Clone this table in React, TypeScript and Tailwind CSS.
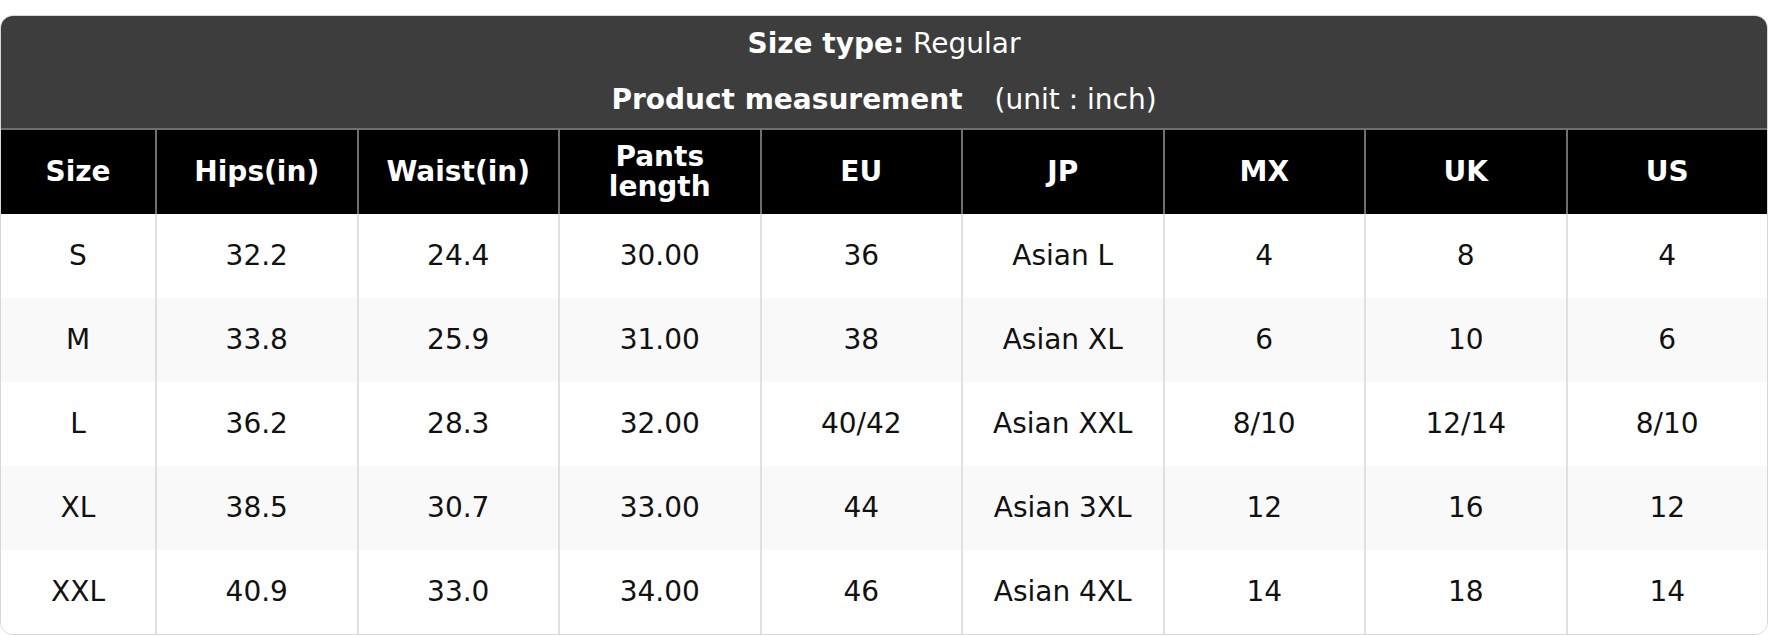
const columns = ['Size', 'Hips(in)', 'Waist(in)', 'Pants length', 'EU', 'JP', 'MX', 'UK', 'US'];

const rows: string[][] = [
  ['S', '32.2', '24.4', '30.00', '36', 'Asian L', '4', '8', '4'],
  ['M', '33.8', '25.9', '31.00', '38', 'Asian XL', '6', '10', '6'],
  ['L', '36.2', '28.3', '32.00', '40/42', 'Asian XXL', '8/10', '12/14', '8/10'],
  ['XL', '38.5', '30.7', '33.00', '44', 'Asian 3XL', '12', '16', '12'],
  ['XXL', '40.9', '33.0', '34.00', '46', 'Asian 4XL', '14', '18', '14'],
];

export default function App() {
  return (
    <div className="bg-white pt-[15px] font-['DejaVu_Sans',sans-serif] text-[28px]">
      <div className="w-[1768px] overflow-hidden rounded-[13px] border border-[#d6d6d6]">
        <div className="bg-[#3d3d3d] text-white">
          <div className="flex h-[56px] items-center justify-center">
            <span className="font-bold">Size type:</span>
            <span>&nbsp;Regular</span>
          </div>
          <div className="flex h-[56px] items-center justify-center">
            <span className="font-bold">Product measurement</span>
            <span className="ml-[32px]">(unit : inch)</span>
          </div>
        </div>

        <div className="grid h-[86px] grid-cols-[154px_repeat(8,minmax(0,1fr))] border-t-2 border-[#6f6f6f] bg-black text-white">
          {columns.map((col, i) => (
            <div
              key={col}
              className={`flex items-center justify-center px-2 text-center font-bold leading-[30px] ${
                i > 0 ? 'border-l-2 border-[#6f6f6f]' : ''
              }`}
            >
              {col === 'Pants length' ? (
                <span>
                  Pants
                  <br />
                  length
                </span>
              ) : (
                col
              )}
            </div>
          ))}
        </div>

        {rows.map((row, r) => (
          <div
            key={row[0]}
            className={`grid h-[84px] grid-cols-[154px_repeat(8,minmax(0,1fr))] text-[#111] ${
              r % 2 === 1 ? 'bg-[#f9f9f9]' : 'bg-white'
            }`}
          >
            {row.map((cell, i) => (
              <div
                key={i}
                className={`flex items-center justify-center ${i > 0 ? 'border-l-2 border-[#e0e0e0]' : ''}`}
              >
                {cell}
              </div>
            ))}
          </div>
        ))}
      </div>
    </div>
  );
}
